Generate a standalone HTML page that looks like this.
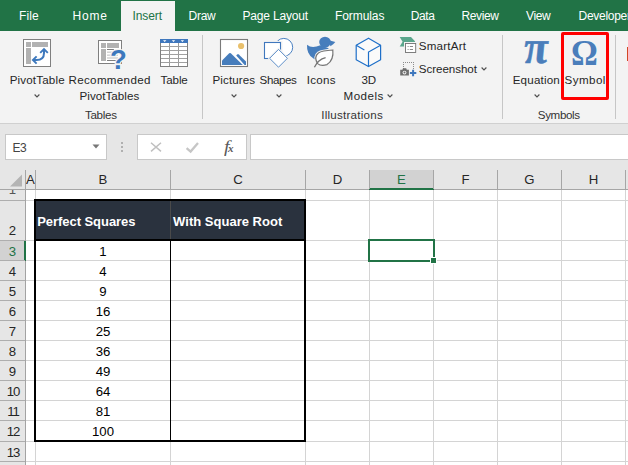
<!DOCTYPE html>
<html><head><meta charset="utf-8">
<style>
html,body{margin:0;padding:0;}
body{width:628px;height:465px;overflow:hidden;position:relative;background:#fff;font-family:"Liberation Sans",sans-serif;color:#262626;}
.abs,.tab,.lbl,.grp,.sep,.box,.ch,.rh,.vl,.hl,.num,svg{position:absolute;}
#tabs{left:0;top:0;width:628px;height:31px;background:#217346;}
.tab{top:8px;height:16px;line-height:16px;color:#fff;font-size:12px;white-space:nowrap;}
#ribbon{left:0;top:31px;width:628px;height:92px;background:#f3f3f3;}
.lbl{font-size:11.6px;color:#262626;white-space:nowrap;line-height:16px;height:16px;}
.grp{font-size:11.6px;color:#333;white-space:nowrap;line-height:16px;height:16px;}
.sep{width:1px;background:#c6c6c6;top:35px;height:84px;}
#fbar{left:0;top:123px;width:628px;height:46px;background:#e6e6e6;}
.box{background:#fff;border:1px solid #c8c8c8;box-sizing:border-box;}
#colhdr{left:0;top:169px;width:628px;height:20px;background:#e6e6e6;}
.ch{top:169px;height:20px;line-height:21px;font-size:13.2px;text-align:center;color:#262626;}
.rh{left:0;width:25px;font-size:13.2px;text-align:center;color:#262626;line-height:20px;height:20px;}
.vl{width:1px;background:#d4d4d4;}
.hl{height:1px;background:#d4d4d4;}
.num{left:36px;width:134px;text-align:center;font-size:13.2px;color:#000;line-height:20px;height:20px;}
</style></head><body>

<div id="tabs" class="abs"></div>
<div class="abs" style="left:121px;top:1px;width:54px;height:30px;background:#f3f3f3;"></div>
<div class="tab" id="tab0" style="left:19.00px;letter-spacing:0.083px;">File</div>
<div class="tab" id="tab1" style="left:72.50px;letter-spacing:0.833px;">Home</div>
<div class="tab" id="tab2" style="left:132.60px;letter-spacing:-0.120px;color:#217346;">Insert</div>
<div class="tab" id="tab3" style="left:188.55px;letter-spacing:-0.283px;">Draw</div>
<div class="tab" id="tab4" style="left:242.50px;letter-spacing:-0.175px;">Page Layout</div>
<div class="tab" id="tab5" style="left:335.05px;letter-spacing:-0.093px;">Formulas</div>
<div class="tab" id="tab6" style="left:410.70px;letter-spacing:-0.400px;">Data</div>
<div class="tab" id="tab7" style="left:461.50px;letter-spacing:-0.390px;">Review</div>
<div class="tab" id="tab8" style="left:526.00px;letter-spacing:-0.350px;">View</div>
<div class="tab" id="tab9" style="left:578.60px;letter-spacing:-0.300px;">Developer</div>
<div id="ribbon" class="abs"></div>
<div class="lbl" id="lbl0" style="left:9.70px;letter-spacing:0.156px;top:71.5px;">PivotTable</div>
<div class="lbl" id="lbl1" style="left:68.55px;letter-spacing:0.320px;top:71.5px;">Recommended</div>
<div class="lbl" id="lbl2" style="left:79.50px;letter-spacing:0.040px;top:87.5px;">PivotTables</div>
<div class="lbl" id="lbl3" style="left:160.60px;letter-spacing:-0.125px;top:71.5px;">Table</div>
<div class="lbl" id="lbl4" style="left:212.50px;letter-spacing:0.100px;top:71.5px;">Pictures</div>
<div class="lbl" id="lbl5" style="left:259.60px;letter-spacing:-0.430px;top:71.5px;">Shapes</div>
<div class="lbl" id="lbl6" style="left:306.65px;letter-spacing:0.288px;top:71.5px;">Icons</div>
<div class="lbl" id="lbl7" style="left:361.55px;letter-spacing:-0.200px;top:71.5px;">3D</div>
<div class="lbl" id="lbl8" style="left:343.50px;letter-spacing:0.500px;top:87.5px;">Models</div>
<div class="lbl" id="lbl9" style="left:418.80px;letter-spacing:0.200px;top:37.5px;">SmartArt</div>
<div class="lbl" id="lbl10" style="left:418.80px;letter-spacing:-0.056px;top:60.5px;">Screenshot</div>
<div class="lbl" id="lbl11" style="left:512.70px;letter-spacing:0.193px;top:71.5px;">Equation</div>
<div class="lbl" id="lbl12" style="left:564.60px;letter-spacing:0.430px;top:71.5px;">Symbol</div>
<div class="grp" id="grp0" style="left:84.90px;letter-spacing:-0.270px;top:107.0px;">Tables</div>
<div class="grp" id="grp1" style="left:321.30px;letter-spacing:0.229px;top:107.0px;">Illustrations</div>
<div class="grp" id="grp2" style="left:537.80px;letter-spacing:-0.367px;top:107.0px;">Symbols</div>
<div class="sep" style="left:202px;"></div>
<div class="sep" style="left:502px;"></div>
<div class="sep" style="left:615px;"></div>
<svg style="left:33px;top:92.5px" width="8" height="6" viewBox="0 0 8 6"><path d="M1.6 1.5 L4 3.9 L6.4 1.5" fill="none" stroke="#505050" stroke-width="1.15"/></svg>
<svg style="left:230.3px;top:92.5px" width="8" height="6" viewBox="0 0 8 6"><path d="M1.6 1.5 L4 3.9 L6.4 1.5" fill="none" stroke="#505050" stroke-width="1.15"/></svg>
<svg style="left:275px;top:92.5px" width="8" height="6" viewBox="0 0 8 6"><path d="M1.6 1.5 L4 3.9 L6.4 1.5" fill="none" stroke="#505050" stroke-width="1.15"/></svg>
<svg style="left:386px;top:92.5px" width="8" height="6" viewBox="0 0 8 6"><path d="M1.6 1.5 L4 3.9 L6.4 1.5" fill="none" stroke="#505050" stroke-width="1.15"/></svg>
<svg style="left:480.4px;top:65.5px" width="8" height="6" viewBox="0 0 8 6"><path d="M1.6 1.5 L4 3.9 L6.4 1.5" fill="none" stroke="#505050" stroke-width="1.15"/></svg>
<svg style="left:533px;top:92.5px" width="8" height="6" viewBox="0 0 8 6"><path d="M1.6 1.5 L4 3.9 L6.4 1.5" fill="none" stroke="#505050" stroke-width="1.15"/></svg>
<div class="abs" style="left:561px;top:32px;width:48px;height:68px;border:3px solid #ff0000;border-radius:2px;box-sizing:border-box;"></div>
<div class="abs" style="left:627px;top:47px;width:1px;height:14px;background:#d24726;"></div>
<!-- PivotTable icon -->
<svg style="left:22px;top:38px" width="30" height="30" viewBox="22 38 30 30">
<rect x="23.5" y="39.5" width="27" height="27" fill="#fff" stroke="#7f7f7f" stroke-width="1"/>
<rect x="26" y="42" width="5" height="5" fill="#b2b2b2"/><rect x="32" y="42" width="16" height="5" fill="#b2b2b2"/><rect x="26" y="48" width="5" height="16" fill="#b2b2b2"/>
<path d="M44 49.2 V53 C44 58.2 41 60 36.5 60 H33.5" fill="none" stroke="#3d78bd" stroke-width="2"/>
<path d="M40.2 52.8 L44 49 L47.8 52.8" fill="none" stroke="#3d78bd" stroke-width="1.9"/>
<path d="M36.6 56.3 L32.9 60 L36.6 63.7" fill="none" stroke="#3d78bd" stroke-width="1.9"/>
</svg>
<!-- Recommended PivotTables icon -->
<svg style="left:97px;top:38px" width="32" height="34" viewBox="97 38 32 34">
<rect x="98.5" y="40.5" width="23" height="23" fill="#fff" stroke="#7f7f7f" stroke-width="1"/>
<rect x="101" y="43" width="5" height="5" fill="#b2b2b2"/><rect x="107" y="43" width="12" height="5" fill="#b2b2b2"/><rect x="101" y="49" width="5" height="12" fill="#b2b2b2"/>
<rect x="107" y="49" width="7" height="1" fill="#7f7f7f"/><rect x="107" y="51.5" width="11" height="1.4" fill="#d0d0d0"/><rect x="107" y="54.5" width="11" height="1.4" fill="#d0d0d0"/><rect x="107" y="57.3" width="11" height="1.4" fill="#d0d0d0"/><rect x="107" y="60" width="10" height="1" fill="#7f7f7f"/>
<text x="110" y="68.6" font-family="Liberation Sans, sans-serif" font-weight="bold" font-size="27.5" fill="#3d78bd" stroke="#f3f3f3" stroke-width="2.4" paint-order="stroke">?</text>
</svg>
<!-- Table icon -->
<svg style="left:160px;top:39px" width="28" height="28" viewBox="160 39 28 28">
<rect x="160.5" y="39.5" width="27" height="27" fill="#fff" stroke="#7f7f7f" stroke-width="1"/>
<path d="M169.5 43 V66 M178.5 43 V66" stroke="#9a9a9a" stroke-width="1"/>
<path d="M161 46.5 H187 M161 50.5 H187 M161 54.5 H187 M161 58.5 H187 M161 62.5 H187" stroke="#a0a0a0" stroke-width="1"/>
<rect x="160" y="39" width="28" height="4" fill="#3f77bd"/>
<path d="M163 40.2 H166.4 L164.7 42 Z M171.8 40.2 H175.2 L173.5 42 Z M180.7 40.2 H184.1 L182.4 42 Z" fill="#fff"/>
</svg>
<!-- Pictures icon -->
<svg style="left:219px;top:38px" width="30" height="30" viewBox="219 38 30 30">
<rect x="220.5" y="39.5" width="27" height="27" fill="#fff" stroke="#7a7a7a" stroke-width="1.1"/>
<circle cx="241.1" cy="46" r="3.1" fill="#e9c06c"/>
<path d="M222 65 V60.4 L229.2 53.3 Q230 52.6 230.8 53.3 L242.8 65 Z" fill="#467dbc"/>
<path d="M236.2 55.6 L237.3 54.4 Q238 53.8 238.8 54.4 L246 61.5 V65 H244.6 Z" fill="#467dbc"/>
</svg>
<!-- Shapes icon -->
<svg style="left:262px;top:36px" width="34" height="34" viewBox="262 36 34 34">
<circle cx="283.8" cy="47.3" r="8.9" fill="#fff" stroke="#4b81c2" stroke-width="1"/>
<rect x="263" y="41" width="19.5" height="19.5" fill="#f3f3f3"/>
<rect x="264.5" y="42.5" width="16" height="16" fill="#fff" stroke="#3f77bd" stroke-width="1.1"/>
<path d="M278.5 47.6 L289.2 58.3 L278.5 69 L267.8 58.3 Z" fill="#f3f3f3"/>
<path d="M278.5 49.4 L287.4 58.3 L278.5 67.2 L269.6 58.3 Z" fill="#fff" stroke="#4b81c2" stroke-width="0.9"/>
</svg>
<!-- Icons icon -->
<svg style="left:305px;top:35px" width="32" height="34" viewBox="305 35 32 34">
<ellipse cx="325" cy="42.1" rx="5.8" ry="5.4" fill="#467dbc"/>
<path d="M329 40.3 L335.3 42.1 Q333.6 44.6 330.4 46.2 Z" fill="#467dbc"/>
<path d="M307 44.8 Q312 49 320.3 45.2 L328.6 48.2 L327 54 L320 60 L314.4 59.3 Q310 57 308.2 52.5 Q306.8 49 307 44.8 Z" fill="#467dbc"/>
<path d="M332.8 50 Q334 60 327 64.6 Q321 66.5 317.6 63.6 Q313.6 57 318.4 53 Q322 50.6 332.8 50 Z" fill="#fff" stroke="#f3f3f3" stroke-width="3"/>
<path d="M332.8 50 Q334 60 327 64.6 Q321 66.5 317.6 63.6 Q313.6 57 318.4 53 Q322 50.6 332.8 50 Z" fill="#fff" stroke="#767676" stroke-width="1.2"/>
<path d="M314.4 67.3 Q318 59.5 325.6 57.6" fill="none" stroke="#767676" stroke-width="1.3"/>
</svg>
<!-- 3D cube -->
<svg style="left:354px;top:36px" width="30" height="33" viewBox="354 36 30 33">
<path d="M368.5 38.2 L380.6 45.2 V59.7 L368.5 66.6 L356.2 59.7 V45.2 Z" fill="#fafafa" stroke="#1e6fc8" stroke-width="1.2" stroke-linejoin="round"/>
<path d="M380.6 45.2 L368.5 52.1 V66.6 M356.2 45.2 L364.4 50" fill="none" stroke="#1e6fc8" stroke-width="1.2"/>
</svg>
<!-- SmartArt -->
<svg style="left:398px;top:35px" width="20" height="20" viewBox="398 35 20 20">
<path d="M399.7 37.1 H411 L415.2 41.6 L411 46.4 H399.7 L402.6 41.7 Z" fill="#5ba68c"/>
<rect x="404" y="42" width="13" height="12" fill="#f3f3f3"/>
<rect x="405.5" y="43.5" width="10.2" height="9" fill="#fff" stroke="#717171" stroke-width="0.9"/>
<rect x="407.6" y="46" width="1" height="1" fill="#8a8a8a"/><rect x="409.8" y="46" width="3.2" height="1" fill="#8a8a8a"/>
<rect x="407.6" y="49" width="1" height="1" fill="#8a8a8a"/><rect x="409.8" y="49" width="3.2" height="1" fill="#8a8a8a"/>
</svg>
<!-- Screenshot -->
<svg style="left:398px;top:60px" width="20" height="18" viewBox="398 60 20 18">
<rect x="403" y="62" width="1" height="1" fill="#8c8c8c"/><rect x="405" y="62" width="1" height="1" fill="#8c8c8c"/><rect x="407" y="62" width="1" height="1" fill="#8c8c8c"/><rect x="409" y="62" width="1" height="1" fill="#8c8c8c"/><rect x="411" y="62" width="1" height="1" fill="#8c8c8c"/><rect x="413" y="62" width="1" height="1" fill="#8c8c8c"/><rect x="403" y="64" width="1" height="1" fill="#8c8c8c"/><rect x="413" y="64" width="1" height="1" fill="#8c8c8c"/><rect x="403" y="66" width="1" height="1" fill="#8c8c8c"/><rect x="413" y="66" width="1" height="1" fill="#8c8c8c"/><rect x="403" y="68" width="1" height="1" fill="#8c8c8c"/><rect x="413" y="68" width="1" height="1" fill="#8c8c8c"/>
<path d="M400.2 69.7 H402.4 L403 68.2 H406.2 L406.8 69.7 H408.9 V75.4 H400.2 Z" fill="#6e6e6e"/>
<circle cx="404.5" cy="72.6" r="1.9" fill="#f3f3f3"/><circle cx="404.5" cy="72.6" r="1" fill="#6e6e6e"/>
<path d="M413.1 69.8 V76.2 M409.9 73 H416.3" stroke="#3f77bd" stroke-width="2"/>
</svg>
<!-- pi & omega -->
<div class="abs" id="pi" style="left:525.4px;top:26.6px;transform-origin:0 36px;transform:scaleY(1.08) skewX(4deg);-webkit-text-stroke:0.5px #4a7ebb;font-family:'Liberation Serif',serif;font-style:italic;font-weight:bold;font-size:44px;line-height:44px;color:#4a7ebb;">π</div>
<div class="abs" id="om" style="left:571px;top:33px;transform-origin:1px 0;transform:scaleX(0.93);font-family:'Liberation Serif',serif;font-weight:bold;font-size:36px;line-height:40px;color:#4a7ebb;">Ω</div>

<div id="fbar" class="abs"></div>
<div class="abs" style="left:0;top:123px;width:628px;height:1px;background:#d0d0d0;"></div>
<div class="box" style="left:5px;top:134px;width:102px;height:26px;"></div>
<div class="abs" id="nb" style="left:12.5px;top:140px;font-size:12px;line-height:16px;color:#444;letter-spacing:-0.4px;">E3</div>
<svg style="left:92px;top:144px" width="8" height="5" viewBox="0 0 8 5"><path d="M0.5 0.5 H7.5 L4 4.5 Z" fill="#777"/></svg>
<div class="abs" style="left:121px;top:142px;width:2px;height:2px;background:#b0b0b0;"></div>
<div class="abs" style="left:121px;top:146px;width:2px;height:2px;background:#b0b0b0;"></div>
<div class="abs" style="left:121px;top:150px;width:2px;height:2px;background:#b0b0b0;"></div>
<div class="box" style="left:137px;top:134px;width:110px;height:26px;"></div>
<div class="box" style="left:250px;top:134px;width:380px;height:26px;"></div>
<svg style="left:150px;top:142px" width="12" height="10" viewBox="0 0 12 10"><path d="M1 0.8 L11 9.4 M11 0.8 L1 9.4" stroke="#c0c0c0" stroke-width="1.5" fill="none"/></svg>
<svg style="left:185px;top:141px" width="15" height="13" viewBox="0 0 15 13"><path d="M1.6 7.2 L5.6 10.6 L13 2" stroke="#c6c6c6" stroke-width="2.3" fill="none"/></svg>
<div class="abs" id="fx" style="left:223.5px;top:136.5px;font-family:'Liberation Serif',serif;font-style:italic;font-size:16.5px;line-height:20px;color:#5a5a5a;"><span style="display:inline-block;transform:scaleX(1.2);transform-origin:0 0;">f</span><span style="font-size:11px;font-weight:bold;margin-left:0px;position:relative;top:0.5px;">x</span></div>
<div id="colhdr" class="abs"></div>
<div class="abs" style="left:369px;top:170px;width:65px;height:19px;background:#d2d2d2;"></div>
<div class="abs" style="left:0;top:189px;width:628px;height:1px;background:#a6a6a6;"></div>
<div class="abs" style="left:369px;top:188px;width:65px;height:2px;background:#217346;"></div>
<div class="ch" style="left:26px;width:9px;">A</div>
<div class="ch" style="left:36px;width:134px;">B</div>
<div class="ch" style="left:171px;width:134px;">C</div>
<div class="ch" style="left:306px;width:63px;">D</div>
<div class="ch" style="left:370px;width:63px;color:#217346;">E</div>
<div class="ch" style="left:434px;width:63px;">F</div>
<div class="ch" style="left:498px;width:63px;">G</div>
<div class="ch" style="left:562px;width:63px;">H</div>
<div class="abs" style="left:25px;top:170px;width:1px;height:19px;background:#a6a6a6;"></div>
<div class="abs" style="left:35px;top:170px;width:1px;height:19px;background:#a6a6a6;"></div>
<div class="abs" style="left:170px;top:170px;width:1px;height:19px;background:#a6a6a6;"></div>
<div class="abs" style="left:305px;top:170px;width:1px;height:19px;background:#a6a6a6;"></div>
<div class="abs" style="left:369px;top:170px;width:1px;height:19px;background:#a6a6a6;"></div>
<div class="abs" style="left:433px;top:170px;width:1px;height:19px;background:#a6a6a6;"></div>
<div class="abs" style="left:497px;top:170px;width:1px;height:19px;background:#a6a6a6;"></div>
<div class="abs" style="left:561px;top:170px;width:1px;height:19px;background:#a6a6a6;"></div>
<div class="abs" style="left:625px;top:170px;width:1px;height:19px;background:#a6a6a6;"></div>
<svg style="left:9px;top:174px" width="14" height="13" viewBox="0 0 14 13"><path d="M13 0.5 V12.5 H1 Z" fill="#b4b4b4"/></svg>
<div class="abs" style="left:0;top:190px;width:25px;height:275px;background:#e6e6e6;"></div>
<div class="abs" style="left:0;top:241px;width:25px;height:19px;background:#d2d2d2;"></div>
<div class="abs" style="left:25px;top:190px;width:1px;height:275px;background:#a3a3a3;"></div>
<div class="abs" style="left:24px;top:241px;width:2px;height:20px;background:#217346;"></div>
<div class="hl" style="left:26px;top:200px;width:602px;"></div>
<div class="abs" style="left:0;top:200px;width:25px;height:1px;background:#aeaeae;"></div>
<div class="hl" style="left:26px;top:240px;width:602px;"></div>
<div class="abs" style="left:0;top:240px;width:25px;height:1px;background:#aeaeae;"></div>
<div class="hl" style="left:26px;top:260px;width:602px;"></div>
<div class="abs" style="left:0;top:260px;width:25px;height:1px;background:#aeaeae;"></div>
<div class="hl" style="left:26px;top:280px;width:602px;"></div>
<div class="abs" style="left:0;top:280px;width:25px;height:1px;background:#aeaeae;"></div>
<div class="hl" style="left:26px;top:300px;width:602px;"></div>
<div class="abs" style="left:0;top:300px;width:25px;height:1px;background:#aeaeae;"></div>
<div class="hl" style="left:26px;top:320px;width:602px;"></div>
<div class="abs" style="left:0;top:320px;width:25px;height:1px;background:#aeaeae;"></div>
<div class="hl" style="left:26px;top:340px;width:602px;"></div>
<div class="abs" style="left:0;top:340px;width:25px;height:1px;background:#aeaeae;"></div>
<div class="hl" style="left:26px;top:360px;width:602px;"></div>
<div class="abs" style="left:0;top:360px;width:25px;height:1px;background:#aeaeae;"></div>
<div class="hl" style="left:26px;top:380px;width:602px;"></div>
<div class="abs" style="left:0;top:380px;width:25px;height:1px;background:#aeaeae;"></div>
<div class="hl" style="left:26px;top:400px;width:602px;"></div>
<div class="abs" style="left:0;top:400px;width:25px;height:1px;background:#aeaeae;"></div>
<div class="hl" style="left:26px;top:420px;width:602px;"></div>
<div class="abs" style="left:0;top:420px;width:25px;height:1px;background:#aeaeae;"></div>
<div class="hl" style="left:26px;top:441px;width:602px;"></div>
<div class="abs" style="left:0;top:441px;width:25px;height:1px;background:#aeaeae;"></div>
<div class="hl" style="left:26px;top:461px;width:602px;"></div>
<div class="abs" style="left:0;top:461px;width:25px;height:1px;background:#aeaeae;"></div>
<div class="vl" style="left:35px;top:190px;height:275px;"></div>
<div class="vl" style="left:170px;top:190px;height:275px;"></div>
<div class="vl" style="left:305px;top:190px;height:275px;"></div>
<div class="vl" style="left:369px;top:190px;height:275px;"></div>
<div class="vl" style="left:433px;top:190px;height:275px;"></div>
<div class="vl" style="left:497px;top:190px;height:275px;"></div>
<div class="vl" style="left:561px;top:190px;height:275px;"></div>
<div class="vl" style="left:625px;top:190px;height:275px;"></div>
<div class="rh" style="top:190px;height:4px;overflow:hidden;color:#555;"><span style="position:relative;top:-10.5px">1</span></div>
<div class="rh" style="top:220.5px;">2</div>
<div class="rh" style="top:241.5px;color:#217346;">3</div>
<div class="rh" style="top:261.5px;">4</div>
<div class="rh" style="top:281.5px;">5</div>
<div class="rh" style="top:301.5px;">6</div>
<div class="rh" style="top:321.5px;">7</div>
<div class="rh" style="top:341.5px;">8</div>
<div class="rh" style="top:361.5px;">9</div>
<div class="rh" style="top:381.5px;letter-spacing:-1px;text-indent:1.2px;">10</div>
<div class="rh" style="top:401.5px;letter-spacing:-1px;text-indent:1.2px;">11</div>
<div class="rh" style="top:421.5px;letter-spacing:-1px;text-indent:1.2px;">12</div>
<div class="rh" style="top:442.5px;letter-spacing:-1px;text-indent:1.2px;">13</div>
<div class="abs" style="left:34px;top:199px;width:272px;height:243px;border:2px solid #000;box-sizing:border-box;"></div>
<div class="abs" style="left:36px;top:201px;width:268px;height:38px;background:#2a323e;"></div>
<div class="abs" style="left:34px;top:239px;width:272px;height:2px;background:#000;"></div>
<div class="abs" style="left:170px;top:241px;width:1px;height:199px;background:#000;"></div>
<div class="abs" style="left:170px;top:201px;width:1px;height:38px;background:#4a4a4a;"></div>
<div class="abs" id="h1" style="left:37.25px;letter-spacing:-0.054px;top:213px;font-size:13px;font-weight:bold;color:#fff;line-height:18px;white-space:nowrap;">Perfect Squares</div>
<div class="abs" id="h2" style="left:173.10px;letter-spacing:0.013px;top:213px;font-size:13px;font-weight:bold;color:#fff;line-height:18px;white-space:nowrap;">With Square Root</div>
<div class="num" style="top:241.5px;">1</div>
<div class="num" style="top:261.5px;">4</div>
<div class="num" style="top:281.5px;">9</div>
<div class="num" style="top:301.5px;">16</div>
<div class="num" style="top:321.5px;">25</div>
<div class="num" style="top:341.5px;">36</div>
<div class="num" style="top:361.5px;">49</div>
<div class="num" style="top:381.5px;">64</div>
<div class="num" style="top:401.5px;">81</div>
<div class="num" style="top:421.5px;">100</div>
<div class="abs" style="left:368px;top:239px;width:67px;height:23px;border:2px solid #217346;box-sizing:border-box;"></div>
<div class="abs" style="left:430px;top:257px;width:7px;height:7px;background:#fff;"></div>
<div class="abs" style="left:431px;top:258px;width:5px;height:5px;background:#217346;"></div>
</body></html>
